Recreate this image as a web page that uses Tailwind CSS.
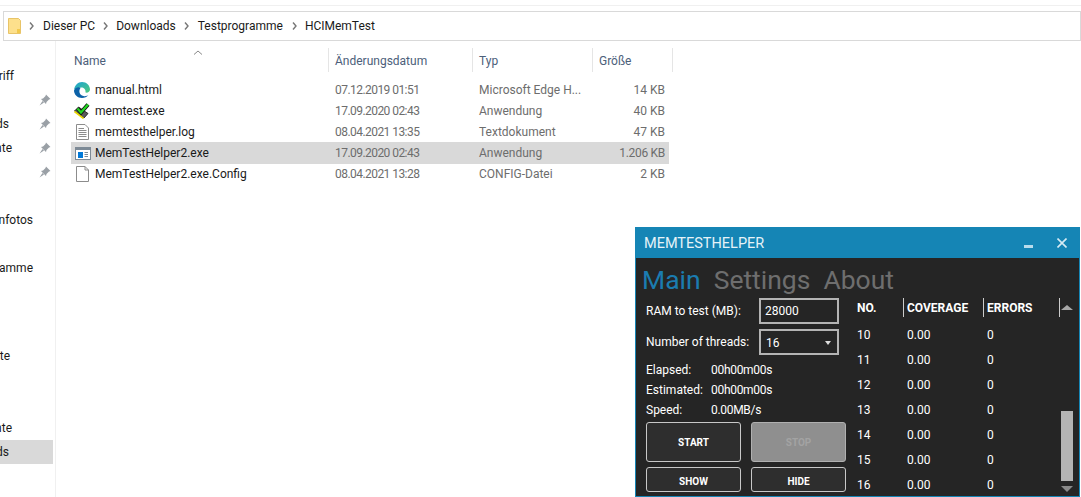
<!doctype html>
<html lang="de">
  <head>
    <meta charset="UTF-8" />
    <title>HCIMemTest</title>
    <script src="https://cdn.jsdelivr.net/npm/@tailwindcss/browser@4"></script>
  </head>
  <body class="bg-white">
    <div class="relative w-[1081px] h-[497px] overflow-hidden bg-white font-['Roboto',sans-serif] text-[12px] text-[#1a1a1a]">
      <!-- explorer -->
      <div class="h-[5px]"></div>
      <div class="h-px bg-[#f0f0f0]"></div>
      <div class="h-[5px]"></div>
      <nav class="ml-[3px] h-[30px] border border-[#d9d9d9] flex items-center pl-[4px]">
        <svg class="w-[13px] h-[16px] mr-[8px]" viewBox="0 0 13 16">
          <path d="M0.5 0.5H10.5L12.5 2.5V15.5H0.5Z" fill="#fde08c" stroke="#e8c468" />
          <rect x="9" y="11" width="3" height="4" fill="#f2c94c" />
        </svg>
        <svg class="w-[5px] h-[8px] mr-[9px]" viewBox="0 0 5 8"><path d="M1 0.5L4 4 1 7.5" fill="none" stroke="#777" stroke-width="1.4" /></svg>
        <span class="mr-[8px]">Dieser PC</span>
        <svg class="w-[5px] h-[8px] mr-[8px]" viewBox="0 0 5 8"><path d="M1 0.5L4 4 1 7.5" fill="none" stroke="#777" stroke-width="1.4" /></svg>
        <span class="mr-[8px]">Downloads</span>
        <svg class="w-[5px] h-[8px] mr-[9px]" viewBox="0 0 5 8"><path d="M1 0.5L4 4 1 7.5" fill="none" stroke="#777" stroke-width="1.4" /></svg>
        <span class="mr-[9px]">Testprogramme</span>
        <svg class="w-[5px] h-[8px] mr-[8px]" viewBox="0 0 5 8"><path d="M1 0.5L4 4 1 7.5" fill="none" stroke="#777" stroke-width="1.4" /></svg>
        <span>HCIMemTest</span>
      </nav>
      <div class="flex">
        <aside class="w-[56px] h-[456px] border-r border-[#f0f0f0] pt-[23px] shrink-0 overflow-hidden">
          <div class="h-[24px] flex items-center"><span class="w-[14px] flex justify-end whitespace-nowrap">Schnellzugriff</span></div>
          <div class="h-[24px] flex items-center">
            <svg class="ml-auto mr-[4px] w-[12px] h-[12px]" viewBox="0 0 12 12"><path d="M7 0.5L11.5 5 10 5.5 7.5 8 7 10 2 5 4 4.5 6.5 2Z M3.5 7L0.5 11.5 5 8.5Z" fill="#9aa0a6" /></svg>
          </div>
          <div class="h-[24px] flex items-center"><span class="w-[9px] flex justify-end whitespace-nowrap">Downloads</span>
            <svg class="ml-auto mr-[4px] w-[12px] h-[12px]" viewBox="0 0 12 12"><path d="M7 0.5L11.5 5 10 5.5 7.5 8 7 10 2 5 4 4.5 6.5 2Z M3.5 7L0.5 11.5 5 8.5Z" fill="#9aa0a6" /></svg>
          </div>
          <div class="h-[24px] flex items-center"><span class="w-[12px] flex justify-end whitespace-nowrap">Dokumente</span>
            <svg class="ml-auto mr-[4px] w-[12px] h-[12px]" viewBox="0 0 12 12"><path d="M7 0.5L11.5 5 10 5.5 7.5 8 7 10 2 5 4 4.5 6.5 2Z M3.5 7L0.5 11.5 5 8.5Z" fill="#9aa0a6" /></svg>
          </div>
          <div class="h-[24px] flex items-center">
            <svg class="ml-auto mr-[4px] w-[12px] h-[12px]" viewBox="0 0 12 12"><path d="M7 0.5L11.5 5 10 5.5 7.5 8 7 10 2 5 4 4.5 6.5 2Z M3.5 7L0.5 11.5 5 8.5Z" fill="#9aa0a6" /></svg>
          </div>
          <div class="h-[24px]"></div>
          <div class="h-[24px] flex items-center"><span class="w-[33px] flex justify-end whitespace-nowrap">Familienfotos</span></div>
          <div class="h-[24px]"></div>
          <div class="h-[24px] flex items-center"><span class="w-[33px] flex justify-end whitespace-nowrap">Testprogramme</span></div>
          <div class="h-[24px]"></div>
          <div class="h-[24px]"></div>
          <div class="h-[24px] mt-[16px] flex items-center"><span class="w-[10px] flex justify-end whitespace-nowrap">Objekte</span></div>
          <div class="h-[24px]"></div>
          <div class="h-[24px]"></div>
          <div class="h-[24px] flex items-center"><span class="w-[12px] flex justify-end whitespace-nowrap">Dokumente</span></div>
          <div class="h-[24px] w-[53px] bg-[#d9d9d9] flex items-center"><span class="w-[9px] flex justify-end whitespace-nowrap">Downloads</span></div>
        </aside>
        <main class="w-[617px] relative pt-[7px]">
          <svg class="absolute left-[137px] top-[9px] w-[10px] h-[5px]" viewBox="0 0 10 5"><path d="M1 4.5L5 1 9 4.5" fill="none" stroke="#888" /></svg>
          <div class="h-[24px] flex text-[#4c607a] ml-[18px] w-[599px]">
            <div class="w-[255px] border-r border-[#e5e5e5] flex items-center pt-[1px]">Name</div>
            <div class="w-[144px] border-r border-[#e5e5e5] flex items-center pt-[1px] pl-[6px]">Änderungsdatum</div>
            <div class="w-[120px] border-r border-[#e5e5e5] flex items-center pt-[1px] pl-[6px]">Typ</div>
            <div class="w-[80px] border-r border-[#e5e5e5] flex items-center pt-[1px] pl-[6px]">Größe</div>
          </div>
          <ul class="mt-[7px] ml-[15px] w-[598px]">
            <li class="h-[21px] flex items-center">
              <div class="w-[24px] pl-[3px]"><svg class="w-[16px] h-[16px]" viewBox="0 0 16 16">
                <defs>
                  <linearGradient id="edgeTop" x1="0" y1="0" x2="1" y2="1"><stop offset="0" stop-color="#1ba1d8" /><stop offset="1" stop-color="#4fcb7a" /></linearGradient>
                </defs>
                <path d="M0 8.5C0.5 3 4 0 8 0 12.5 0 16 3.5 16 7.5 16 10 13.5 11 11.5 10.5 12 7 9.5 5.5 7.5 5.5 4.5 5.5 3 8 1.5 7 0.8 6.6 0.3 7.4 0 8.5Z" fill="url(#edgeTop)" />
                <path d="M0 8.5C1.5 5 5 4.5 6.5 6 4.5 8.5 5 13 9.5 14 11.5 14.5 13.5 13.8 14.5 13 13 15 10.5 16 8 16 3.5 16 0 12.5 0 8.5Z" fill="#0c62a8" />
              </svg></div>
              <span class="w-[240px]">manual.html</span>
              <span class="w-[144px] text-[#6d6d6d] tracking-[-0.55px]">07.12.2019 01:51</span>
              <span class="w-[120px] text-[#6d6d6d]">Microsoft Edge H...</span>
              <span class="w-[66px] text-right text-[#6d6d6d]">14 KB</span>
            </li>
            <li class="h-[21px] flex items-center">
              <div class="w-[24px] pl-[3px]"><svg class="w-[16px] h-[16px]" viewBox="0 0 16 16">
                <path d="M0.5 8L4.5 4 14 10.5 10 15Z" fill="#5a5a5a" stroke="#111" stroke-width="0.8" />
                <path d="M0.5 8.5L9.5 15.5" stroke="#e8d800" stroke-width="1.6" />
                <path d="M3.5 5.5L7 9.5 14 1.5" fill="none" stroke="#111" stroke-width="4" />
                <path d="M3.5 5.5L7 9.5 14 1.5" fill="none" stroke="#22d622" stroke-width="2.4" />
              </svg></div>
              <span class="w-[240px]">memtest.exe</span>
              <span class="w-[144px] text-[#6d6d6d] tracking-[-0.55px]">17.09.2020 02:43</span>
              <span class="w-[120px] text-[#6d6d6d]">Anwendung</span>
              <span class="w-[66px] text-right text-[#6d6d6d]">40 KB</span>
            </li>
            <li class="h-[21px] flex items-center">
              <div class="w-[24px] pl-[5px]"><svg class="w-[13px] h-[16px]" viewBox="0 0 13 16"><path d="M0.5 0.5H9L12.5 4V15.5H0.5Z" fill="#fff" stroke="#8c8c8c" /><path d="M2.5 4.5H8M2.5 6.5H10.5M2.5 8.5H10.5M2.5 10.5H10.5M2.5 12.5H10.5" stroke="#8c8c8c" /></svg></div>
              <span class="w-[240px]">memtesthelper.log</span>
              <span class="w-[144px] text-[#6d6d6d] tracking-[-0.55px]">08.04.2021 13:35</span>
              <span class="w-[120px] text-[#6d6d6d]">Textdokument</span>
              <span class="w-[66px] text-right text-[#6d6d6d]">47 KB</span>
            </li>
            <li class="h-[22px] flex items-center bg-[#d9d9d9]">
              <div class="w-[24px] pl-[4px]"><svg class="w-[16px] h-[13px]" viewBox="0 0 16 13"><rect x="0.5" y="0.5" width="15" height="12" fill="#fff" stroke="#7d8a96" /><rect x="1" y="1" width="14" height="2" fill="#7d8a96" /><rect x="3" y="5" width="5" height="6" fill="#0078d7" /><path d="M9.5 5.5H13M9.5 7.5H13M9.5 9.5H13" stroke="#7d8a96" /></svg></div>
              <span class="w-[240px]">MemTestHelper2.exe</span>
              <span class="w-[144px] text-[#6d6d6d] tracking-[-0.55px]">17.09.2020 02:43</span>
              <span class="w-[120px] text-[#6d6d6d]">Anwendung</span>
              <span class="w-[66px] text-right text-[#6d6d6d] tracking-[-0.3px]">1.206 KB</span>
            </li>
            <li class="h-[19px] flex items-center">
              <div class="w-[24px] pl-[5px]"><svg class="w-[13px] h-[16px]" viewBox="0 0 13 16"><path d="M0.5 0.5H9L12.5 4V15.5H0.5Z" fill="#fff" stroke="#8c8c8c" /><path d="M9 0.5V4H12.5" fill="none" stroke="#8c8c8c" /></svg></div>
              <span class="w-[240px]">MemTestHelper2.exe.Config</span>
              <span class="w-[144px] text-[#6d6d6d] tracking-[-0.55px]">08.04.2021 13:28</span>
              <span class="w-[120px] text-[#6d6d6d]">CONFIG-Datei</span>
              <span class="w-[66px] text-right text-[#6d6d6d]">2 KB</span>
            </li>
          </ul>
        </main>
      </div>

      <!-- floating app window -->
      <section class="absolute left-[635px] top-[227px] w-[445px] h-[270px] bg-[#252525] border-x border-b border-[#1585b5] text-white">
        <header class="h-[31px] -mx-px bg-[#1585b5] flex items-center pl-[9px] pr-[13px] text-[14.5px] text-[#e6f3f8]">
          <span class="flex-1 pt-[2px]">MEMTESTHELPER</span>
          <span class="w-[9px] h-[3px] bg-[#b9dcec] mt-[8px] mr-[24px]"></span>
          <svg class="w-[10px] h-[10px]" viewBox="0 0 10 10"><path d="M0.5 0.5L9.5 9.5M9.5 0.5L0.5 9.5" stroke="#d6ebf4" stroke-width="1.6" /></svg>
        </header>
        <div class="h-[40px] flex items-center gap-[13px] pl-[6px] pt-[3px] text-[26.5px] text-[#6e6e6e]">
          <span class="text-[#1b7cb0]">Main</span>
          <span>Settings</span>
          <span>About</span>
        </div>
        <div class="flex">
          <div class="w-[211px] pl-[10px] shrink-0">
            <div class="h-[26px] flex items-center">
              <span class="w-[113px]">RAM to test (MB):</span>
              <div class="w-[80px] h-[26px] border-2 border-[#b4b4b4] flex items-center pl-[4px]">28000</div>
            </div>
            <div class="h-[26px] mt-[5px] flex items-center">
              <span class="w-[113px]">Number of threads:</span>
              <div class="w-[80px] h-[26px] border-2 border-[#b4b4b4] flex items-center pl-[5px] pr-[6px] pt-[2px] justify-between">16<svg class="w-[6px] h-[4px]" viewBox="0 0 6 4"><path d="M0 0H6L3 4Z" fill="#ddd" /></svg></div>
            </div>
            <dl class="mt-[5px]">
              <div class="h-[20px] flex items-center"><dt class="w-[65px]">Elapsed:</dt><dd class="tracking-[-0.3px]">00h00m00s</dd></div>
              <div class="h-[20px] flex items-center"><dt class="w-[65px]">Estimated:</dt><dd class="tracking-[-0.3px]">00h00m00s</dd></div>
              <div class="h-[20px] flex items-center"><dt class="w-[65px]">Speed:</dt><dd class="tracking-[-0.3px]">0.00MB/s</dd></div>
            </dl>
            <div class="mt-[2px] grid grid-cols-[95px_95px] gap-x-[10px] gap-y-[5px] text-[10px] font-bold">
              <button class="h-[40px] pt-[1px] border border-[#c8c8c8] rounded-[3px] bg-[#2e2e2e]">START</button>
              <button class="h-[40px] pt-[1px] border border-[#b0b0b0] rounded-[3px] bg-[#8f8f8f] text-[#a3a3a3]">STOP</button>
              <button class="h-[25px] pt-[3px] border border-[#c8c8c8] rounded-[3px] bg-[#2e2e2e]">SHOW</button>
              <button class="h-[25px] pt-[3px] border border-[#c8c8c8] rounded-[3px] bg-[#2e2e2e]">HIDE</button>
            </div>
          </div>
          <div class="relative flex-1 pl-[10px]">
            <div class="flex h-[19px] font-bold items-center">
              <span class="w-[47px] h-full flex items-center pt-[1px] border-r border-[#ccc]">NO.</span>
              <span class="w-[80px] h-full flex items-center pt-[1px] border-r border-[#ccc] pl-[3px]">COVERAGE</span>
              <span class="w-[76px] h-full flex items-center pt-[1px] border-r border-[#ccc] pl-[3px]">ERRORS</span>
            </div>
            <div class="mt-[5px]">
              <div class="flex h-[25px] items-center"><span class="w-[50px]">10</span><span class="w-[80px]">0.00</span><span>0</span></div>
              <div class="flex h-[25px] items-center"><span class="w-[50px]">11</span><span class="w-[80px]">0.00</span><span>0</span></div>
              <div class="flex h-[25px] items-center"><span class="w-[50px]">12</span><span class="w-[80px]">0.00</span><span>0</span></div>
              <div class="flex h-[25px] items-center"><span class="w-[50px]">13</span><span class="w-[80px]">0.00</span><span>0</span></div>
              <div class="flex h-[25px] items-center"><span class="w-[50px]">14</span><span class="w-[80px]">0.00</span><span>0</span></div>
              <div class="flex h-[25px] items-center"><span class="w-[50px]">15</span><span class="w-[80px]">0.00</span><span>0</span></div>
              <div class="flex h-[25px] items-center"><span class="w-[50px]">16</span><span class="w-[80px]">0.00</span><span>0</span></div>
            </div>
            <!-- scrollbar -->
            <div class="absolute left-[214px] top-[7px] w-[12px] h-[187px] flex flex-col">
              <svg class="w-[12px] h-[5px] mb-[101px]" viewBox="0 0 12 5"><path d="M0 5L6 0 12 5Z" fill="#a8a8a8" /></svg>
              <div class="h-[70px] bg-[#b4b4b4]"></div>
              <svg class="w-[12px] h-[6px] mt-[5px]" viewBox="0 0 12 6"><path d="M0 0H12L6 6Z" fill="#8a8a8a" /></svg>
            </div>
          </div>
        </div>
      </section>
    </div>
  </body>
</html>
